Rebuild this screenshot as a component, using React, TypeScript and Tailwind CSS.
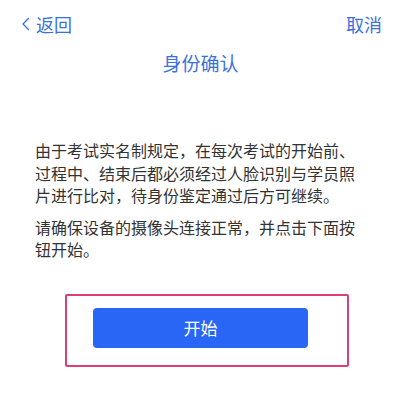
export default function App() {
  return (
    <div
      className="w-[401px] h-[409px] bg-white overflow-hidden"
      style={{ fontFamily: '"Noto Sans CJK SC", "Noto Sans", sans-serif' }}
    >
      {/* 顶部导航 */}
      <div className="flex h-12 items-center justify-between pl-[21px] pr-[19px] text-[18px] text-[#3a72da]">
        <div className="flex items-center">
          <svg width="9" height="14" viewBox="0 0 9 14" className="mr-[6px]">
            <path d="M7.5 1.5 L2 7 L7.5 12.5" fill="none" stroke="#3a72da" strokeWidth="1.4" strokeLinecap="round" strokeLinejoin="round" />
          </svg>
          <span className="leading-none">返回</span>
        </div>
        <span className="leading-none">取消</span>
      </div>

      <h1 className="mt-px text-center text-[19px] leading-[28px] font-normal text-[#3a72da]">身份确认</h1>

      <div className="mt-[62px] ml-[35px] w-[330px] text-[16px] leading-[22.5px] text-[#333333]">
        <p>由于考试实名制规定，在每次考试的开始前、过程中、结束后都必须经过人脸识别与学员照片进行比对，待身份鉴定通过后方可继续。</p>
        <p className="mt-[9px]">请确保设备的摄像头连接正常，并点击下面按钮开始。</p>
      </div>

      <div className="mt-[33px] ml-[65px] w-[284px] h-[73px] rounded-[2px] border-2 border-[#dc3f77] pl-[26px] pt-[12px]">
        <button className="w-[215px] h-[40px] rounded-[4px] bg-[#2a66f5] text-[17px] text-white">开始</button>
      </div>
    </div>
  )
}
